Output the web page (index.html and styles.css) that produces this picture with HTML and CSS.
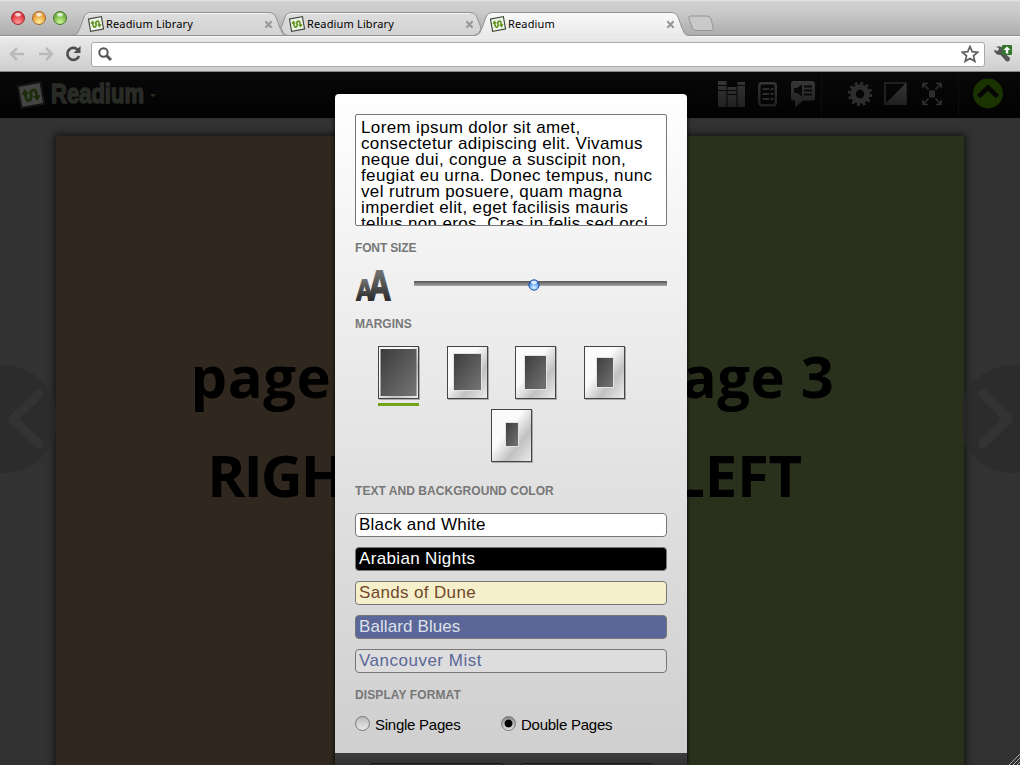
FILE: index.html
```html
<!DOCTYPE html>
<html lang="en">
<head>
<meta charset="utf-8">
<title>Readium</title>
<link rel="stylesheet" href="styles.css">
</head>
<body>
<svg class="defs" width="0" height="0">
  <defs>
    <symbol id="mark" viewBox="0 0 28 28">
      <g transform="rotate(-10 14 14)">
        <rect class="mark-paper" x="2.500" y="3" width="23" height="22" stroke-width="2"/>
        <path d="M8.500 10V15Q8.500 19 11 19T14 15V13Q14 9.500 17 9.500T19.500 13V17" fill="none" stroke="#5f9419" stroke-width="2.800"/>
        <path d="M4.500 12.500L8.500 7L12.500 12.500ZM15.500 15.500L19.500 21L23.500 15.500Z" fill="#5f9419"/>
      </g>
    </symbol>
    <symbol id="close" viewBox="0 0 10 10"><path d="M1.500 1.500L8.500 8.500M8.500 1.500L1.500 8.500" stroke="#999" stroke-width="2.400"/></symbol>
    <linearGradient id="tabFill" x2="0" y2="1"><stop stop-color="#dedede"/><stop offset="1" stop-color="#d2d2d2"/></linearGradient>
    <linearGradient id="activeFill" x2="0" y2="1"><stop stop-color="#f9f9f9"/><stop offset="1" stop-color="#e9e9e9"/></linearGradient>
    <linearGradient id="paper" x2="1" y2="1"><stop offset=".4" stop-color="#fafafa"/><stop offset=".68" stop-color="#c1c1c1"/><stop offset="1" stop-color="#ededed"/></linearGradient>
    <linearGradient id="ink" x1="0" y1="0" x2="1" y2="1"><stop stop-color="#3c3c3c"/><stop offset="1" stop-color="#757575"/></linearGradient>
    <linearGradient id="icon" x2="0" y2="1"><stop stop-color="#363636"/><stop offset="1" stop-color="#202020"/></linearGradient>
    <linearGradient id="letter" x2="0" y2="1"><stop offset=".15" stop-color="#777"/><stop offset=".8" stop-color="#303030"/></linearGradient>
    <radialGradient id="bead" cx=".5" cy=".75" r=".65"><stop stop-color="#d9f6ff"/><stop offset=".65" stop-color="#66a7f0"/><stop offset="1" stop-color="#2451ae"/></radialGradient>
  </defs>
</svg>
<div class="window">
  <header class="tabstrip">
    <div class="lights"><i class="light red"></i><i class="light amber"></i><i class="light green"></i></div>
    <div class="tabs">
      <div class="tab first">
        <svg class="tab-shape" width="218" height="26"><path d="M0 24.500C6 24 6 21 8 17L12 6Q14 1.500 19 1.500H197Q202 1.500 204 6L208 17C210 21 210 24.500 216 24.500Z" fill="url(#tabFill)" stroke="#929292"/><path d="M13 6Q15 2.500 19 2.500H197" fill="none" stroke="#f4f4f4"/></svg>
        <svg class="favicon"><use href="#mark"/></svg><span class="tab-title">Readium Library</span><svg class="tab-close"><use href="#close"/></svg>
      </div>
      <div class="tab second">
        <svg class="tab-shape" width="218" height="26"><path d="M8 17L12 6Q14 1.500 19 1.500H197Q202 1.500 204 6L208 17C207 21 205 24.500 199 24.500H16C10 24.500 10 21 8 17Z" fill="url(#tabFill)" stroke="#929292"/><path d="M13 6Q15 2.500 19 2.500H197" fill="none" stroke="#f4f4f4"/></svg>
        <svg class="favicon"><use href="#mark"/></svg><span class="tab-title">Readium Library</span><svg class="tab-close"><use href="#close"/></svg>
      </div>
      <div class="tab active">
        <svg class="tab-shape" width="218" height="26"><path d="M0 26V24.500C6 24 6 21 8 17L12 6Q14 1.500 19 1.500H197Q202 1.500 204 6L208 17C210 21 210 24.500 216 24.500V26Z" fill="url(#activeFill)"/><path d="M0 24.500C6 24 6 21 8 17L12 6Q14 1.500 19 1.500H197Q202 1.500 204 6L208 17C210 21 210 24.500 216 24.500" fill="none" stroke="#929292"/></svg>
        <svg class="favicon"><use href="#mark"/></svg><span class="tab-title">Readium</span><svg class="tab-close"><use href="#close"/></svg>
      </div>
    </div>
    <svg class="newtab" width="28" height="18"><path d="M3.500 1H20Q23 1 24 4L26 12Q27 15.500 24 15.500H9Q6 15.500 5 12L2 4Q1 1 3.500 1Z" fill="#c9c9c9" stroke="#969696"/></svg>
  </header>
  <div class="toolbar">
    <svg class="back" width="16" height="16"><path d="M15 8H3M8 2L2 8L8 14" fill="none" stroke="#b9b9b9" stroke-width="2.500"/></svg>
    <svg class="forward" width="16" height="16"><path d="M1 8H13M8 2L14 8L8 14" fill="none" stroke="#b9b9b9" stroke-width="2.500"/></svg>
    <svg class="reload" width="17" height="17"><path d="M14 11A6 6 0 1 1 12.500 4.500" fill="none" stroke="#4d4d4d" stroke-width="2.600"/><path d="M15.500 1V8H8.500Z" fill="#4d4d4d"/></svg>
    <div class="address">
      <svg width="15" height="15"><circle cx="5.500" cy="5.500" r="4.200" fill="none" stroke="#555" stroke-width="2"/><path d="M8.500 8.500L13 13" stroke="#555" stroke-width="3"/></svg>
      <svg width="18" height="18"><path d="M9 1.500L11.200 6.700L16.700 7.200L12.500 10.900L13.800 16.300L9 13.400L4.200 16.300L5.500 10.900L1.300 7.200L6.800 6.700Z" fill="#fff" stroke="#5f5f5f" stroke-width="1.700"/></svg>
    </div>
    <svg class="wrench" width="20" height="20"><path d="M1 6L5 7L6 4L3 3Q8 1 10.500 5L10.500 8L17 14Q17 18 13.500 17.500L7.500 11Q2 11 1 6Z" fill="#555"/><rect x="9" y="1" width="10" height="10" rx="1" fill="#33752a"/><path d="M14 2.500L17.500 6H15.200V9.500H12.800V6H10.500Z" fill="#fff"/></svg>
  </div>
  <nav class="reader-nav">
    <svg class="nav-logo"><use href="#mark"/></svg>
    <svg class="wordmark" width="100" height="34"><text x="1" y="26" textLength="93" lengthAdjust="spacingAndGlyphs">Readium</text></svg>
    <i class="caret"></i>
    <div class="nav-tools">
      <svg class="t-books" width="28" height="28"><path d="M0 1H8.500V27H0ZM9.500 7H18.500V27H9.500ZM19.500 2H27V27H19.500Z" fill="url(#icon)"/><path d="M0 5.500H9M0 10.500H9M9 10.500H19M9 14.500H19M19 5.500H27" stroke="#080808"/></svg>
      <svg class="t-list" width="20" height="26"><rect x="1.300" y="2.300" width="16.500" height="22" rx="2.500" fill="none" stroke="url(#icon)" stroke-width="2.400"/><path d="M4.500 8H11M4.500 13H11M4.500 18H11M12.500 8H15.500M12.500 13H15.500M12.500 18H15.500" stroke="#2c2c2c" stroke-width="2"/></svg>
      <svg class="t-speech" width="26" height="28"><path d="M3 1H22Q25 1 25 4V18Q25 20.500 22 20.500H13L5 27.500V20.500H3Q1 20.500 1 18V4Q1 1 3 1Z" fill="url(#icon)"/><path d="M4 8H7L12 4.500V16.500L7 13H4Z" fill="#080808"/><path d="M14 6.500H22M14 10.500H22M14 14.500H22" stroke="#080808" stroke-width="1.800"/></svg>
      <i class="rule rule-tools"></i>
      <svg class="t-gear" width="26" height="26"><circle cx="13" cy="13" r="7" fill="none" stroke="#2d2d2d" stroke-width="5.500"/><circle cx="13" cy="13" r="10.700" fill="none" stroke="#2d2d2d" stroke-width="3" stroke-dasharray="2.900 2.702"/></svg>
      <svg class="t-contrast" width="24" height="24"><rect x="1" y="1" width="21" height="21" fill="none" stroke="#2a2a2a" stroke-width="1.500"/><path d="M22 1V22H1Z" fill="url(#icon)"/></svg>
      <svg class="t-expand" width="20" height="24"><path d="M7 8.500H13V15.500H7Z" fill="#2d2d2d"/><path d="M1 6V1.500H6M1.500 2L6.500 7.500M19 6V1.500H14M18.500 2L13.500 7.500M1 18V22.500H6M1.500 22L6.500 16.500M19 18V22.500H14M18.500 22L13.500 16.500" fill="none" stroke="#2e2e2e" stroke-width="1.700"/></svg>
      <i class="rule rule-up"></i>
      <svg class="t-up" width="32" height="32"><circle cx="16" cy="15.500" r="15" fill="#1b3201"/><path d="M6.500 18.500L16 9.500L25.500 18.500" fill="none" stroke="#060606" stroke-width="4.500"/></svg>
    </div>
  </nav>
  <main class="viewer">
    <section class="page page-left"><h1>page 2</h1><h1 class="tight">RIGHT</h1></section>
    <section class="page page-right"><h1>page 3</h1><h1 class="last">LEFT</h1></section>
    <svg class="turn turn-left" width="58" height="110"><circle cx="3" cy="55" r="54"/><path d="M39 30L13 55L39 80"/></svg>
    <svg class="turn turn-right" width="58" height="110"><circle cx="51" cy="55" r="54"/><path d="M21 30L46 55L21 80"/></svg>
    <svg class="grip" width="12" height="12"><path d="M1 12L12 1M5 12L12 5M9 12L12 9" stroke="#aaa"/></svg>
  </main>
  <div class="dialog">
    <div class="settings">
      <div class="preview">Lorem ipsum dolor sit amet,<br>consectetur adipiscing elit. Vivamus<br>neque dui, congue a suscipit non,<br>feugiat eu urna. Donec tempus, nunc<br>vel rutrum posuere, quam magna<br>imperdiet elit, eget facilisis mauris<br>tellus non eros. Cras in felis sed orci</div>
      <h2>FONT SIZE</h2>
      <div class="size-row">
        <svg width="38" height="36"><g class="letters"><text x="1" y="31.500" font-size="30" textLength="17" lengthAdjust="spacingAndGlyphs">A</text><text x="13" y="31.500" font-size="42" textLength="23" lengthAdjust="spacingAndGlyphs">A</text></g></svg>
        <div class="slider"><svg width="12" height="12"><circle cx="6" cy="6" r="5.200" fill="url(#bead)" stroke="#2856a5"/><ellipse cx="6" cy="3.300" rx="3" ry="1.800" fill="#d5eafc"/></svg></div>
      </div>
      <h2 class="margins-label">MARGINS</h2>
      <div class="margins">
        <div class="margin-row upper">
          <svg class="selected" width="42" height="60"><use href="#sheet"/><rect x="2.500" y="3" width="36" height="47" fill="url(#ink)"/><path d="M0 58.500H41" stroke="#72a318" stroke-width="3"/></svg>
          <svg width="42" height="60"><use href="#sheet"/><rect x="6.500" y="7.500" width="28" height="37" fill="url(#ink)" stroke="#e2e2e2"/></svg>
          <svg width="42" height="60"><use href="#sheet"/><rect x="9.500" y="9.500" width="22" height="34" fill="url(#ink)" stroke="#e2e2e2"/></svg>
          <svg width="42" height="60"><use href="#sheet"/><rect x="12.500" y="11.500" width="17" height="30" fill="url(#ink)" stroke="#e2e2e2"/></svg>
        </div>
        <div class="margin-row lower">
          <svg width="42" height="54"><g id="sheet"><rect x="1" y="1" width="41" height="53" fill="#aaa"/><rect x=".5" y=".5" width="40" height="52" fill="url(#paper)" stroke="#444"/></g><rect x="14.500" y="13.500" width="13" height="24" fill="url(#ink)" stroke="#e2e2e2"/></svg>
        </div>
      </div>
      <h2 class="color-label">TEXT AND BACKGROUND COLOR</h2>
      <div class="themes">
        <div class="theme plain">Black and White</div>
        <div class="theme night">Arabian Nights</div>
        <div class="theme sand">Sands of Dune</div>
        <div class="theme ballard">Ballard Blues</div>
        <div class="theme mist">Vancouver Mist</div>
      </div>
      <h2 class="format-label">DISPLAY FORMAT</h2>
      <div class="formats"><div class="format"><i class="radio"></i><span class="single">Single Pages</span></div><div class="format"><i class="radio on"></i><span>Double Pages</span></div></div>
    </div>
    <footer class="actions"><i class="action"></i><i class="action"></i></footer>
  </div>
</div>
</body>
</html>
```
FILE: styles.css
```css
* { box-sizing: border-box; }
body { margin: 0; font-family: "Liberation Sans", sans-serif; }
svg { display: block; flex: none; }
.defs { position: absolute; }
.window { position: relative; width: 1020px; height: 765px; overflow: hidden; background: #323232; }
.mark-paper { fill: #eef2e8; stroke: #3c4537; }

.tabstrip { height: 36px; display: flex; background: linear-gradient(#e8e8e8 0, #d0d0d0 2px, #cacaca 12px, #adadad 35px, #929292 35px); }
.lights { display: flex; gap: 7px; width: 74px; padding: 11px 0 0 11px; }
.light { width: 14px; height: 14px; border-radius: 50%; border: 1px solid; }
.red { border-color: #983033; background: radial-gradient(ellipse 4px 2.5px at 50% 22%, #fff 0, #fff9 60%, transparent), radial-gradient(circle at 50% 85%, #ff9d9b, #de3239 65%); }
.amber { border-color: #a06a2c; background: radial-gradient(ellipse 4px 2.5px at 50% 22%, #fff 0, #fff9 60%, transparent), radial-gradient(circle at 50% 85%, #fff195, #e89737 65%); }
.green { border-color: #4c7a2d; background: radial-gradient(ellipse 4px 2.5px at 50% 22%, #fff 0, #fff9 60%, transparent), radial-gradient(circle at 50% 85%, #ccf798, #6cb03d 65%); }
.tabs { display: flex; padding-top: 11px; }
.tab { position: relative; width: 201px; height: 25px; display: flex; align-items: center; padding: 1px 2px 0 14px; }
.first { z-index: 1; }
.active { z-index: 2; }
.tab-shape { position: absolute; left: -2px; top: 0; }
.favicon { position: relative; width: 16px; height: 16px; }
.tab-title { position: relative; margin: -1px 0 0 2px; font: 11px "Noto Sans", sans-serif; letter-spacing: .15px; color: #000; flex: 1; }
.tab-close { position: relative; width: 9px; height: 9px; }
.newtab { margin: 15px 0 0 10px; }

.toolbar { height: 36px; display: flex; align-items: center; background: linear-gradient(#fafafa 0, #e9e9e9 2px, #cecece 35px, #888 35px); padding: 0 7px 1px 9px; }
.forward { margin-left: 13px; }
.reload { margin-left: 11px; }
.address { flex: 1; height: 25px; margin: 1px 8px 0 9px; border: 1px solid #a9a9a9; border-radius: 3px; background: #fff; display: flex; align-items: center; justify-content: space-between; padding: 0 5px 0 6px; }

.reader-nav { height: 46px; background: linear-gradient(#080808, #020202); display: flex; align-items: center; padding-left: 17px; }
.nav-logo { width: 28px; height: 28px; opacity: .27; }
.wordmark { margin: -2px 0 0 5px; }
.wordmark text { font: bold 28px "Liberation Sans", sans-serif; fill: #292b27; stroke: #292b27; stroke-width: 1.6px; }
.caret { border: 3px solid transparent; border-top-color: #29301e; border-bottom: 0; }
.nav-tools { margin-left: auto; height: 46px; display: flex; align-items: center; padding: 0 16px 2px 0; }
.t-list { margin-left: 12px; }
.t-speech { margin-left: 12px; }
.rule { width: 1px; height: 44px; background: #0d0d0d; }
.rule-tools { margin: 0 25px 0 5px; }
.t-contrast { margin-left: 11px; }
.t-expand { margin-left: 14px; }
.rule-up { margin: 0 13px 0 16px; }

.viewer { position: relative; height: 647px; display: flex; padding: 18px 56px 0; overflow: hidden; }
.page { width: 454px; height: 640px; padding-top: 200px; text-align: center; box-shadow: 0 0 7px 2px #151515; }
.page-left { background: #30281e; }
.page-right { background: #29311c; }
.page h1 { margin: 0 0 20px; height: 79px; padding-left: 5px; font: bold 58px/79px "Open Sans", sans-serif; letter-spacing: .5px; color: #000; }
.page .tight { padding-left: 16px; letter-spacing: -2px; }
.page .last { padding-left: 0; letter-spacing: -.3px; }
.turn { position: absolute; top: 246px; }
.turn circle { fill: #2a2a2a; fill-opacity: .65; }
.turn path { fill: none; stroke: #333; stroke-width: 9px; stroke-linecap: round; stroke-linejoin: round; }
.turn-left { left: 0; }
.turn-right { right: 0; }
.grip { position: absolute; right: 0; bottom: 0; }

.dialog { position: absolute; left: 335px; top: 94px; width: 352px; height: 671px; border-radius: 4px 4px 0 0; overflow: hidden; box-shadow: 0 0 4px #000; }
.settings { height: 659px; padding: 20px 20px 0; background: linear-gradient(#fff, #f2f2f2 25%, #e2e2e2 57%, #cfcfcf); }
.preview { height: 112px; padding: 5px 0 0 5px; border: 1px solid #777; border-radius: 2px; background: #fff; font-size: 17px; line-height: 16px; letter-spacing: .36px; white-space: nowrap; overflow: hidden; }
h2 { margin: 14px 0 0; height: 14px; font-size: 12px; line-height: 17px; letter-spacing: -.15px; color: #777; }
.size-row { height: 36px; margin-top: 14px; display: flex; }
.letters { font-family: "Liberation Sans", sans-serif; font-weight: bold; fill: url(#letter); stroke: url(#letter); stroke-width: 1.8px; }
.slider { width: 253px; height: 5px; margin: 13px 0 0 21px; padding-left: 114px; background: linear-gradient(#555, #a9a9a9); }
.slider svg { margin-top: -2px; }
.margins-label { margin-top: 12px; letter-spacing: 0; }
.margins { margin-top: 16px; }
.margin-row { display: flex; justify-content: center; }
.upper { gap: 26.5px; padding-right: 18.5px; height: 63px; }
.lower { padding-left: 2px; }
.color-label { margin-top: 20px; letter-spacing: .05px; }
.themes { margin-top: 16px; display: grid; gap: 10px; }
.theme { height: 24px; border: 1px solid #777; border-radius: 4px; padding-left: 3px; font-size: 17px; line-height: 21px; letter-spacing: .25px; }
.plain { background: #fff; color: #000; }
.night { background: #000; color: #fff; letter-spacing: .35px; }
.sand { background: #f5f0cb; color: #70482c; letter-spacing: .35px; }
.ballard { background: #5a6798; color: #dfe1ea; letter-spacing: .1px; }
.mist { background: #ddd; color: #5a6798; letter-spacing: .5px; }
.format-label { margin-top: 14px; letter-spacing: .1px; }
.formats { margin-top: 14px; display: flex; font-size: 15px; line-height: 19px; letter-spacing: -.25px; }
.format { width: 146px; display: flex; gap: 5px; }
.radio { width: 15px; height: 15px; margin-top: 1px; border: 1px solid #777; border-radius: 50%; background: linear-gradient(#bbb, #e9e9e9); }
.on { background: radial-gradient(circle, #000 0 3.5px, transparent 4.3px), linear-gradient(#888, #ddd); }
.actions { height: 12px; display: flex; gap: 16px; padding: 10px 34px 0 35px; background: linear-gradient(#3d3d3d, #313131); }
.action { flex: 1; height: 20px; border: 1px solid #171717; border-radius: 3px; }
```
